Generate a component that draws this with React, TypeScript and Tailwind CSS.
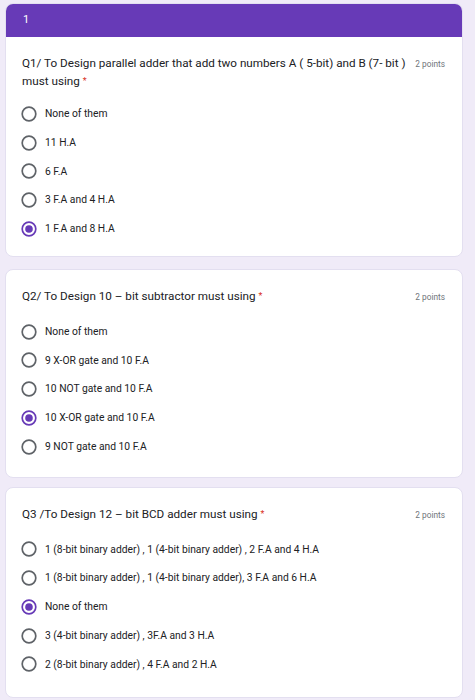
import React from "react";

type Question = {
  title: React.ReactNode;
  options: string[];
  selected: number;
  gapTop: string;
  titleGap: string;
  padBottom: string;
};

const questions: Question[] = [
  {
    title: (
      <>
        Q1/ To Design parallel adder that add two numbers A ( 5-bit) and B (7- bit )
        <br />
        must using
      </>
    ),
    options: ["None of them", "11 H.A", "6 F.A", "3 F.A and 4 H.A", "1 F.A and 8 H.A"],
    selected: 4,
    gapTop: "mt-0",
    titleGap: "mt-[10px]",
    padBottom: "pb-[13px]",
  },
  {
    title: <>Q2/ To Design 10 – bit subtractor must using</>,
    options: [
      "None of them",
      "9 X-OR gate and 10 F.A",
      "10 NOT gate and 10 F.A",
      "10 X-OR gate and 10 F.A",
      "9 NOT gate and 10 F.A",
    ],
    selected: 3,
    gapTop: "mt-[12px]",
    titleGap: "mt-[11.5px]",
    padBottom: "pb-[16px]",
  },
  {
    title: <>Q3 /To Design 12 – bit BCD adder must using</>,
    options: [
      "1 (8-bit binary adder) , 1 (4-bit binary adder) , 2 F.A and 4 H.A",
      "1 (8-bit binary adder) , 1 (4-bit binary adder), 3 F.A and 6 H.A",
      "None of them",
      "3 (4-bit binary adder) , 3F.A and 3 H.A",
      "2 (8-bit binary adder) , 4 F.A and 2 H.A",
    ],
    selected: 2,
    gapTop: "mt-[9px]",
    titleGap: "mt-[11.5px]",
    padBottom: "pb-[18px]",
  },
];

function Radio({ checked }: { checked: boolean }) {
  return (
    <svg width="16" height="16" viewBox="0 0 16 16" className="shrink-0">
      <circle
        cx="8"
        cy="8"
        r="6.8"
        fill="none"
        stroke={checked ? "#673ab7" : "#5f6368"}
        strokeWidth="1.7"
      />
      {checked && <circle cx="8" cy="8" r="3.8" fill="#673ab7" />}
    </svg>
  );
}

export default function App() {
  return (
    <div
      className="min-h-[700px] w-[475px] bg-[#f0ebf8] pl-[5px] pr-[12px] pt-[3px] pb-[6px]"
      style={{ fontFamily: "Roboto, 'Liberation Sans', sans-serif" }}
    >
      {questions.map((q, qi) => (
        <div
          key={qi}
          className={`${q.gapTop} bg-white rounded-lg border border-[#e3dff0] overflow-hidden`}
        >
          {/* ===== section header (first card only) ===== */}
          {qi === 0 && (
            <div className="h-[33px] bg-[#673ab7] flex items-center pl-[17px] text-white text-[11px]">
              1
            </div>
          )}

          <div className={`pl-[16px] pr-[17px] pt-[16.5px] ${q.padBottom}`}>
            {/* TITLE */}
            <div className="flex items-start justify-between">
              <p className="text-[11.7px] leading-[18px] text-[#202124]">
                {q.title}
                <span className="text-[#d93025] text-[9px] align-top ml-[3px]">*</span>
              </p>
              <span className="shrink-0 text-[8.3px] leading-[18px] text-[#70757a] ml-[4px] pt-[1px]">
                2 points
              </span>
            </div>

            {/* OPTIONS */}
            <div className={q.titleGap}>
              {q.options.map((opt, oi) => (
                <div key={oi} className="h-[28.75px] flex items-center">
                  <div className="ml-[-1px]">
                    <Radio checked={oi === q.selected} />
                  </div>
                  <span className="ml-[8px] text-[10.3px] text-[#202124]">{opt}</span>
                </div>
              ))}
            </div>
          </div>
        </div>
      ))}
    </div>
  );
}
